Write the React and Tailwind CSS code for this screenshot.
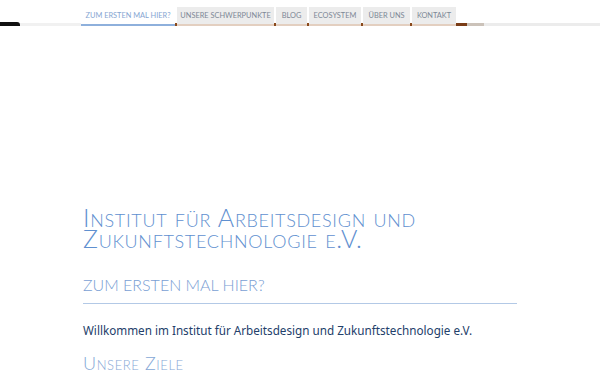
export default function App() {
  const tabs = [
    { label: "Zum ersten Mal hier?", w: "w-[94px]", active: true },
    { label: "Unsere Schwerpunkte", w: "w-[97px]" },
    { label: "Blog", w: "w-[31px]" },
    { label: "Ecosystem", w: "w-[52px]" },
    { label: "Über uns", w: "w-[47px]" },
    { label: "Kontakt", w: "w-[44px]" },
  ];
  return (
    <div className="w-[600px] h-[375px] overflow-hidden bg-white">
      <div className="flex items-end pt-[7px]">
        <div className="flex w-[81px] items-end">
          <div className="h-[4px] w-[20px] rounded-tr-[3px] bg-[#111]" />
          <div className="h-[3px] flex-1 bg-[#f1f1f1]" />
        </div>
        <nav className="flex gap-[2px] bg-[linear-gradient(to_bottom,transparent_calc(100%-3px),#8a4a1c_calc(100%-3px))]">
          {tabs.map((t) => (
            <div
              key={t.label}
              className={
                t.active
                  ? `${t.w} h-[19px] flex items-center justify-center bg-white border-b-2 border-[#8eb0dc] text-[#86a6d2] uppercase text-[7.4px] [font-family:Lato,'Noto_Sans',sans-serif]`
                  : `${t.w} h-[19px] flex items-center justify-center bg-[#ececec] border-b-2 border-[#e3cfc0] text-[#7d8896] uppercase text-[7.4px] [font-family:Lato,'Noto_Sans',sans-serif]`
              }
            >
              <span className="pt-[1px] whitespace-nowrap">{t.label}</span>
            </div>
          ))}
        </nav>
        <div className="h-[3px] w-[11px] bg-[#7a3c16]" />
        <div className="h-[3px] w-[17px] bg-[#cbc2b9]" />
        <div className="h-[3px] flex-1 bg-[#ececec]" />
      </div>

      <div className="h-[181px]" />

      <main className="mx-auto w-[434px]">
        <h1 className="text-[25px] leading-[21px] font-light text-[#5f90d0] [font-variant:small-caps] tracking-[0.7px] [font-family:Lato,sans-serif]">
          Institut für Arbeitsdesign und Zukunftstechnologie e.V.
        </h1>
        <h2 className="mt-[26px] pb-[8px] border-b border-[#b3c9e6] text-[16px] leading-[20px] font-light uppercase text-[#7aa0d4] [font-family:Lato,sans-serif]">
          Zum ersten Mal hier?
        </h2>
        <p className="mt-[17px] text-[11.7px] leading-[18px] text-[#23406a] [font-family:'Noto_Sans',sans-serif]">
          Willkommen im Institut für Arbeitsdesign und Zukunftstechnologie e.V.
        </p>
        <h3 className="mt-[13px] text-[18px] leading-[22px] font-light text-[#86a8d6] [font-variant:small-caps] tracking-[0.6px] [font-family:Lato,sans-serif]">
          Unsere Ziele
        </h3>
      </main>
    </div>
  );
}
